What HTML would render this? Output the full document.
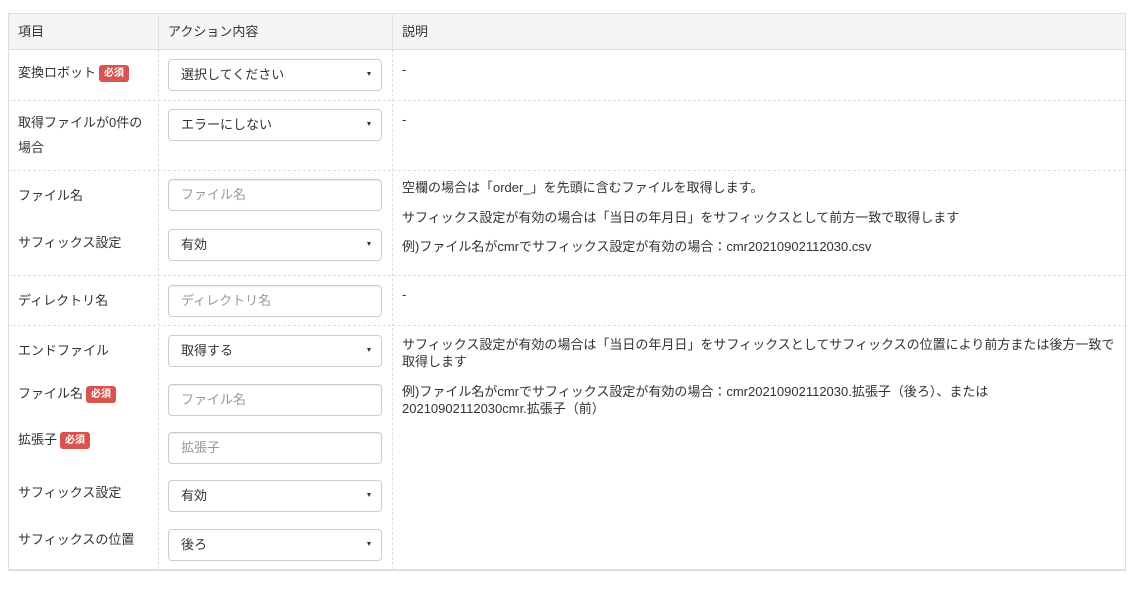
<!DOCTYPE html><html><head><meta charset="utf-8"><style>
body{margin:0;background:#fff;font-family:"Liberation Sans","Noto Sans CJK JP",sans-serif;font-size:13px;color:#333;width:1136px;height:592px;position:relative;overflow:hidden}
.a{position:absolute;white-space:nowrap;line-height:17px}
.box{position:absolute;left:168px;width:214px;height:31px;border:1px solid #ccc;border-radius:4px;box-sizing:border-box;background:#fff;font-size:13px;line-height:29px;padding-left:12px;color:#333}
.box.p{color:#999;box-shadow:inset 0 1px 1px rgba(0,0,0,.075)}
.box.s::after{content:"";position:absolute;right:10px;top:12px;border-left:2.5px solid transparent;border-right:2.5px solid transparent;border-top:4px solid #333}
.b{display:inline-block;background:#d9534f;color:#fff;font-size:10px;font-weight:bold;padding:0 5px;line-height:17px;border-radius:3px;margin-left:3px;vertical-align:1px}
.hl{position:absolute;left:8px;width:1118px;border-top:1px dashed #ddd}
.vl{position:absolute;top:49px;height:521px;border-left:1px dashed #ddd}
</style></head><body>
<div style="position:absolute;left:8px;top:13px;width:1116px;height:556px;border:1px solid #ddd"></div>
<div style="position:absolute;left:9px;top:14px;width:1116px;height:35px;background:#f5f5f5;border-bottom:1px solid #ddd"></div>
<div style="position:absolute;left:158px;top:14px;height:35px;border-left:1px solid #e4e4e4"></div>
<div style="position:absolute;left:392px;top:14px;height:35px;border-left:1px solid #e4e4e4"></div>
<div class="vl" style="left:158px"></div><div class="vl" style="left:392px"></div>
<div class="hl" style="top:100px"></div><div class="hl" style="top:170px"></div><div class="hl" style="top:275px"></div><div class="hl" style="top:325px"></div>
<div style="position:absolute;left:8px;top:569px;width:1118px;border-top:1px solid #ddd"></div>
<div class="a" style="left:18px;top:23px">項目</div>
<div class="a" style="left:168px;top:23px">アクション内容</div>
<div class="a" style="left:402px;top:23px">説明</div>

<div class="a" style="left:18px;top:64px">変換ロボット<span class="b">必須</span></div>
<div class="box s" style="top:59px;height:32px">選択してください</div>
<div class="a" style="left:402px;top:61px">-</div>

<div class="a" style="left:18px;top:114px">取得ファイルが0件の</div>
<div class="a" style="left:18px;top:139px">場合</div>
<div class="box s" style="top:109px;height:32px">エラーにしない</div>
<div class="a" style="left:402px;top:111px">-</div>

<div class="a" style="left:18px;top:187px">ファイル名</div>
<div class="box p" style="top:179px;height:32px">ファイル名</div>
<div class="a" style="left:18px;top:234px">サフィックス設定</div>
<div class="box s" style="top:229px;height:32px">有効</div>
<div class="a" style="left:402px;top:179px">空欄の場合は「order_」を先頭に含むファイルを取得します。</div>
<div class="a" style="left:402px;top:209px">サフィックス設定が有効の場合は「当日の年月日」をサフィックスとして前方一致で取得します</div>
<div class="a" style="left:402px;top:238px">例)ファイル名がcmrでサフィックス設定が有効の場合：cmr20210902112030.csv</div>

<div class="a" style="left:18px;top:292px">ディレクトリ名</div>
<div class="box p" style="top:285px;height:32px">ディレクトリ名</div>
<div class="a" style="left:402px;top:286px">-</div>

<div class="a" style="left:18px;top:342px">エンドファイル</div>
<div class="box s" style="top:335px;height:32px">取得する</div>
<div class="a" style="left:18px;top:385px">ファイル名<span class="b">必須</span></div>
<div class="box p" style="top:384px;height:32px">ファイル名</div>
<div class="a" style="left:18px;top:431px">拡張子<span class="b">必須</span></div>
<div class="box p" style="top:432px;height:32px">拡張子</div>
<div class="a" style="left:18px;top:484px">サフィックス設定</div>
<div class="box s" style="top:480px;height:32px">有効</div>
<div class="a" style="left:18px;top:531px">サフィックスの位置</div>
<div class="box s" style="top:529px;height:32px">後ろ</div>
<div class="a" style="left:402px;top:336px">サフィックス設定が有効の場合は「当日の年月日」をサフィックスとしてサフィックスの位置により前方または後方一致で</div>
<div class="a" style="left:402px;top:353px">取得します</div>
<div class="a" style="left:402px;top:383px">例)ファイル名がcmrでサフィックス設定が有効の場合：cmr20210902112030.拡張子（後ろ）、または</div>
<div class="a" style="left:402px;top:400px">20210902112030cmr.拡張子（前）</div>
</body></html>
